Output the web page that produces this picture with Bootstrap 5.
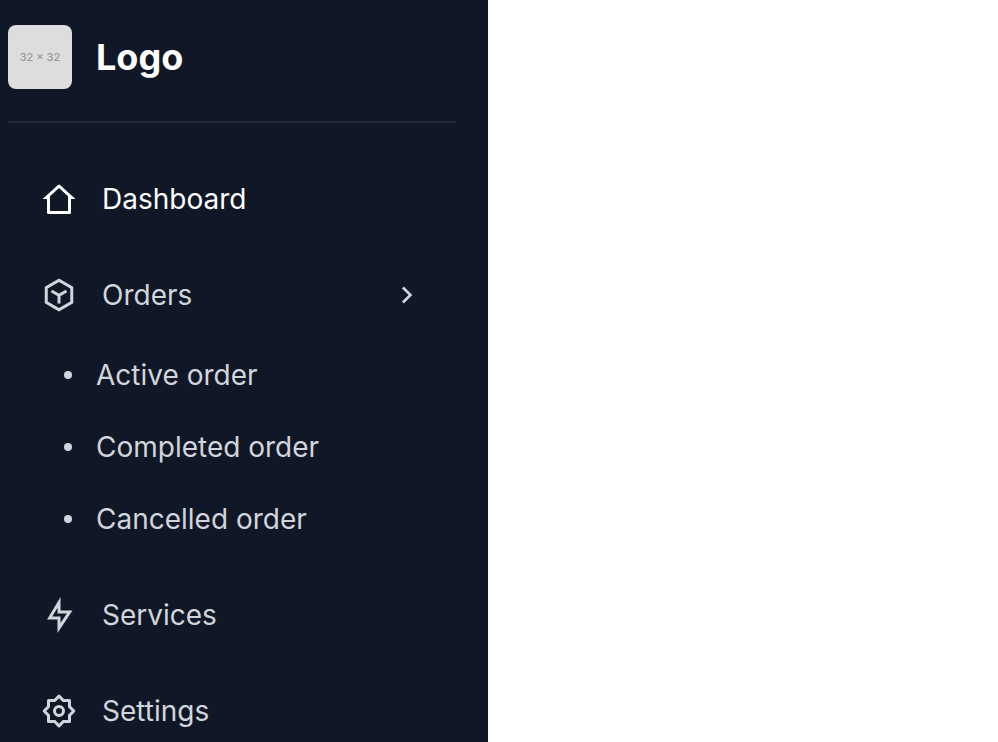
<!DOCTYPE html>
<html lang="en">
<head>
<meta charset="utf-8">
<meta name="viewport" content="width=device-width, initial-scale=1">
<title>Dashboard</title>
<link href="https://cdn.jsdelivr.net/npm/bootstrap@5.3.0/dist/css/bootstrap.min.css" rel="stylesheet">
<style>
body { font-family: Inter, "Liberation Sans", sans-serif; font-size: 28px; line-height: 40px; background: #fff; }
.sidebar { width: 488px; max-width: 100%; background: #101726; padding: 25px 32px 0 8px; }
.brand { gap: 24px; padding-bottom: 32px; border-bottom: 2px solid #1f2937; }
.brand-image { width: 64px; height: 64px; border-radius: 8px; background: #ddd; color: #999; font-size: 11px; font-weight: 500; line-height: 16px; }
.brand-name { font-size: 36px; font-weight: 700; }
.menu { padding-top: 48px; gap: 40px; }
.menu-link, .submenu-link { color: #d1d5db; }
.menu-link { padding: 8px 33px; gap: 25px; }
.menu-link.active, .menu-link:hover, .submenu-link:hover { color: #fff; }
.menu-icon { width: 36px; height: 36px; }
.arrow-icon { width: 32px; height: 32px; }
.submenu { padding-top: 16px; margin-bottom: -8px; }
.submenu-link { padding: 16px 0 16px 56px; gap: 24px; }
.dot { width: 8px; height: 8px; background: currentColor; }
</style>
<script src="https://cdn.jsdelivr.net/npm/bootstrap@5.3.0/dist/js/bootstrap.bundle.min.js" defer></script>
</head>
<body>
<aside class="sidebar min-vh-100">
  <a href="#" class="brand d-flex align-items-center text-decoration-none text-white">
    <span class="brand-image d-flex align-items-center justify-content-center flex-shrink-0">32 × 32</span>
    <span class="brand-name">Logo</span>
  </a>
  <nav aria-label="Main">
    <ul class="menu list-unstyled d-flex flex-column mb-0">
      <li>
        <a href="#" class="menu-link active d-flex align-items-center text-decoration-none" aria-current="page">
          <svg class="menu-icon flex-shrink-0" viewBox="0 0 24 24" fill="currentColor" aria-hidden="true"><path d="M19 22H5a1 1 0 0 1-1-1v-9H1l10.327-9.388a1 1 0 0 1 1.346 0L23 12h-3v9a1 1 0 0 1-1 1zM6 20h12v-9.843l-6-5.454-6 5.454V20z"/></svg>
          <span>Dashboard</span>
        </a>
      </li>
      <li>
        <button type="button" class="menu-link d-flex align-items-center w-100 border-0 bg-transparent text-start" data-bs-toggle="collapse" data-bs-target="#orders" aria-expanded="true" aria-controls="orders">
          <svg class="menu-icon flex-shrink-0" viewBox="0 0 24 24" fill="currentColor" aria-hidden="true"><path d="M12 1l9.500 5.500v11L12 23l-9.500-5.500v-11L12 1zm0 2.311L4.500 7.653v8.694l7.500 4.342 7.500-4.342V7.653L12 3.311z"/><path d="M7 9.300L12 12.200l5-2.900M12 12.200v5.500" fill="none" stroke="currentColor" stroke-width="2"/></svg>
          <span>Orders</span>
          <svg class="arrow-icon flex-shrink-0 ms-auto" viewBox="0 0 24 24" fill="currentColor" aria-hidden="true"><path d="M13.172 12l-4.950-4.950 1.414-1.414L16 12l-6.364 6.364-1.414-1.414z"/></svg>
        </button>
        <ul id="orders" class="submenu collapse show list-unstyled">
          <li><a href="#" class="submenu-link d-flex align-items-center text-decoration-none"><span class="dot rounded-circle"></span>Active order</a></li>
          <li><a href="#" class="submenu-link d-flex align-items-center text-decoration-none"><span class="dot rounded-circle"></span>Completed order</a></li>
          <li><a href="#" class="submenu-link d-flex align-items-center text-decoration-none"><span class="dot rounded-circle"></span>Cancelled order</a></li>
        </ul>
      </li>
      <li>
        <a href="#" class="menu-link d-flex align-items-center text-decoration-none">
          <svg class="menu-icon flex-shrink-0" viewBox="0 0 24 24" fill="currentColor" aria-hidden="true"><path d="M13 9h8L11 24v-9H4l9-15v9zm-2 2V7.220L7.532 13H13v4.394L17.263 11H11z"/></svg>
          <span>Services</span>
        </a>
      </li>
      <li>
        <a href="#" class="menu-link d-flex align-items-center text-decoration-none">
          <svg class="menu-icon flex-shrink-0" viewBox="0 0 24 24" fill="currentColor" aria-hidden="true"><path d="M8.686 4l2.607-2.607a1 1 0 0 1 1.414 0L15.314 4H19a1 1 0 0 1 1 1v3.686l2.607 2.607a1 1 0 0 1 0 1.414L20 15.314V19a1 1 0 0 1-1 1h-3.686l-2.607 2.607a1 1 0 0 1-1.414 0L8.686 20H5a1 1 0 0 1-1-1v-3.686l-2.607-2.607a1 1 0 0 1 0-1.414L4 8.686V5a1 1 0 0 1 1-1h3.686zM6 6v3.515L3.515 12 6 14.485V18h3.515L12 20.485 14.485 18H18v-3.515L20.485 12 18 9.515V6h-3.515L12 3.515 9.515 6H6zm6 10a4 4 0 1 1 0-8 4 4 0 0 1 0 8zm0-2a2 2 0 1 0 0-4 2 2 0 0 0 0 4z"/></svg>
          <span>Settings</span>
        </a>
      </li>
    </ul>
  </nav>
</aside>
</body>
</html>
